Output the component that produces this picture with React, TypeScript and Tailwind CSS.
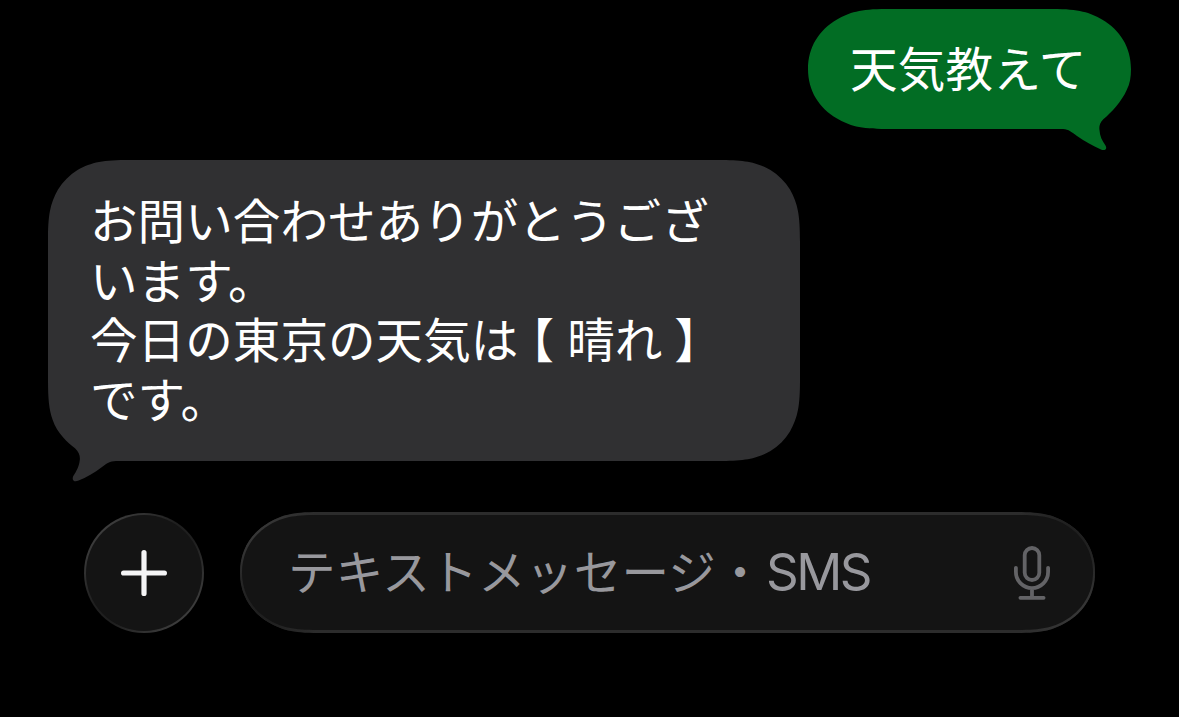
import type { ReactNode } from "react";

interface BubbleProps {
  children: ReactNode;
}

// clip paths give the continuous corners and the tail in one shape
function SentBubble({ children }: BubbleProps) {
  return (
    <div className="w-[323px] h-[142px] bg-[#026d24] pl-[42px] pt-[28px] [clip-path:path('M0,60_C0,38_11,21_29,10.5_C41,3.5_52,0_78,0_H245_C271,0_282,3.5_294,10.5_C312,21_323,38_323,60_C323,68_322,75_318.7,81_C314,92_303,104_295.3,110.3_C291.5,114_291,118_291.5,121_C291.8,127_294,131.5_297.5,136.5_C299.5,140_297,142_293.5,140.7_C285,137_277,132.5_269,127_C263.5,123_261,120.4_255,120_H78_C52,120_41,116.5_29,109.5_C11,99_0,82_0,60_Z')]">
      <p className="text-[47.6px] leading-[60px] tracking-[0.2px] whitespace-nowrap">{children}</p>
    </div>
  );
}

function ReceivedBubble({ children }: BubbleProps) {
  return (
    <div className="w-[752px] h-[322px] bg-[#303032] pl-[42px] pt-[29px] [clip-path:path('M0,82_C0,55_2,44_10,29.5_C15,21.5_21.5,15_29.5,10_C44,2_55,0_82,0_H670_C697,0_708,2_722.5,10_C730.5,15_737,21.5_742,29.5_C750,44_752,55_752,82_V219_C752,246_750,257_742,271.5_C737,279.5_730.5,286_722.5,291_C708,299_697,301_670,301_H68_C61.5,301.1_59,303.3_54,307_C46,313_39,317_30,320.8_C26,322.3_23.5,320_25.3,316_C28.5,311_31,307_31.8,300_C32.3,296_31,292_27,288.3_C20,283_9,273_4.7,260_C1,249_0,240_0,219_Z')]">
      <div className="text-[47.6px] leading-[59.7px] whitespace-nowrap">{children}</div>
    </div>
  );
}

function PlusIcon() {
  return (
    <svg width="46" height="46" viewBox="0 0 46 46" stroke="#f4f4f5" strokeWidth="5.2" strokeLinecap="round">
      <path d="M23 2.6V43.4M2.6 23H43.4" />
    </svg>
  );
}

function MicIcon() {
  return (
    <svg
      width="36"
      height="54"
      viewBox="0 0 36 54"
      fill="none"
      stroke="#636366"
      strokeWidth="3.8"
      strokeLinecap="round"
    >
      <rect x="10.7" y="2" width="14.6" height="32" rx="7.3" />
      <path d="M1.9 21.8V26a16.1 16.1 0 0 0 32.2 0V21.8M18 42.2V51.7M6.4 51.8H29.6" />
    </svg>
  );
}

export default function App() {
  return (
    <div
      lang="ja"
      className="w-[1179px] h-[717px] overflow-hidden bg-black text-white font-['Noto_Sans_CJK_JP',sans-serif] flex flex-col pt-[9px]"
    >
      <div className="flex justify-end pr-12">
        <SentBubble>天気教えて</SentBubble>
      </div>

      <div className="flex pl-12 mt-[9px]">
        <ReceivedBubble>
          <p>お問い合わせありがとうござ</p>
          <p>います。</p>
          <p>
            今日の東京の天気は
            <span className="inline-block w-[12px]"> </span>
            <span className="[font-feature-settings:'halt']">【</span>
            <span className="inline-block w-[13px]"> </span>
            晴れ
            <span className="inline-block w-[12px]"> </span>
            <span className="[font-feature-settings:'halt']">】</span>
          </p>
          <p>です。</p>
        </ReceivedBubble>
      </div>

      <div className="flex items-end gap-9 pl-[84px] mt-[30px]">
        <button
          type="button"
          aria-label="追加"
          className="w-[120px] h-[120px] rounded-full p-[2px] bg-[linear-gradient(135deg,#3c3c3c_15%,#1f1f1f_42%,#1f1f1f_58%,#3c3c3c_85%)]"
        >
          <span className="w-full h-full rounded-full bg-[#141414] flex items-center justify-center">
            <PlusIcon />
          </span>
        </button>

        <div className="w-[855px] h-[121px] px-[2px] py-[3px] bg-[#2c2c2c] bg-[radial-gradient(circle_at_18px_103px,#1f1f1f_10px,transparent_60px),radial-gradient(circle_at_837px_18px,#1f1f1f_10px,transparent_60px),radial-gradient(circle_at_18px_18px,#363636_10px,transparent_60px),radial-gradient(circle_at_837px_103px,#363636_10px,transparent_60px)] [clip-path:path('M0,60.5_C0,38_11,21_29,10.5_C41,3.5_52,0_78,0_H777_C803,0_814,3.5_826,10.5_C844,21_855,38_855,60.5_C855,83_844,100_826,110.5_C814,117.5_803,121_777,121_H78_C52,121_41,117.5_29,110.5_C11,100_0,83_0,60.5_Z')]">
          <div className="w-full h-full bg-[#141414] flex items-center justify-between pl-[46px] pr-[43px] [clip-path:path('M0,57.5_C0,36_11,19.5_28.5,9.2_C40,2.6_51,0_76,0_H775_C800,0_811,2.6_822.5,9.2_C840,19.5_851,36_851,57.5_C851,79_840,95.5_822.5,105.8_C811,112.4_800,115_775,115_H76_C51,115_40,112.4_28.5,105.8_C11,95.5_0,79_0,57.5_Z')]">
            <span className="text-[47.6px] leading-[60px] tracking-[0.25px] whitespace-nowrap text-[#98989d] -mt-[3px]">
              テキストメッセージ・
              <span className="font-[Inter] text-[51px] tracking-[-2.6px] ml-[2px]">SMS</span>
            </span>
            <MicIcon />
          </div>
        </div>
      </div>
    </div>
  );
}
